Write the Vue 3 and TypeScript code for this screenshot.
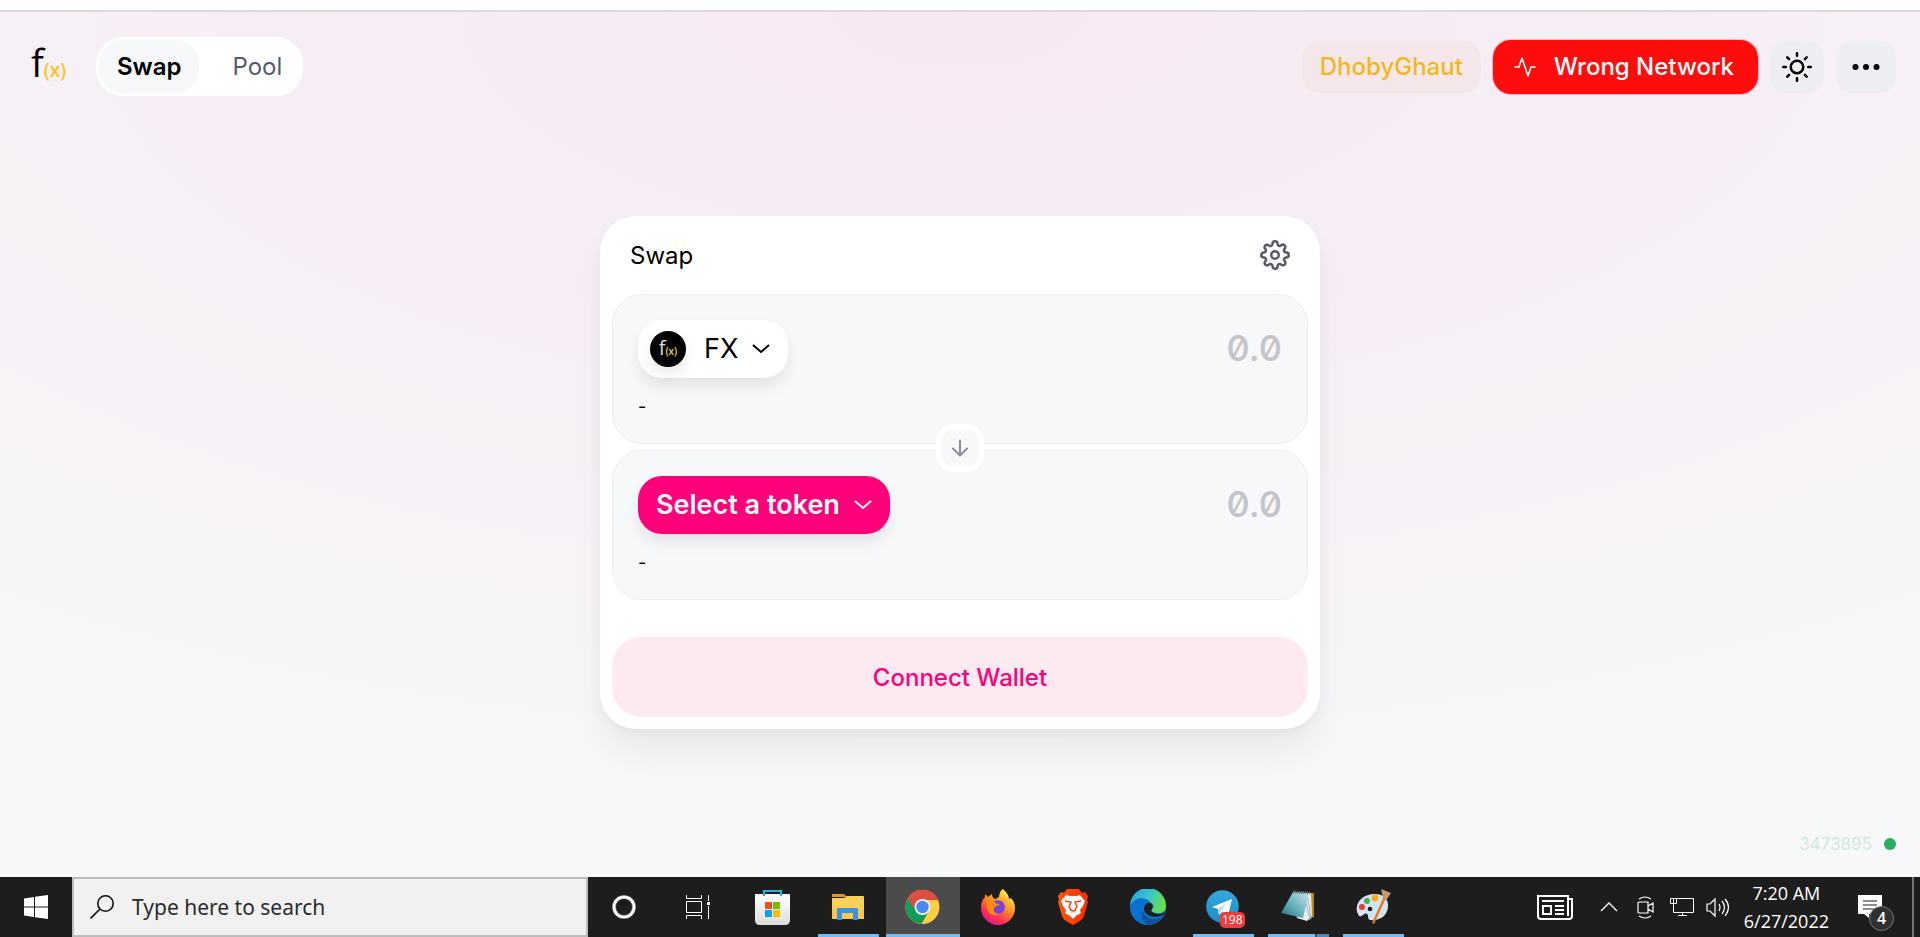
<script setup lang="ts">
import { ref } from 'vue'

interface TaskApp {
  id: string
  label: string
  state: 'idle' | 'running' | 'stacked' | 'active'
}

const apps: TaskApp[] = [
  { id: 'store', label: 'Microsoft Store', state: 'idle' },
  { id: 'explorer', label: 'File Explorer', state: 'running' },
  { id: 'chrome', label: 'Google Chrome', state: 'active' },
  { id: 'firefox', label: 'Firefox', state: 'idle' },
  { id: 'brave', label: 'Brave', state: 'idle' },
  { id: 'edge', label: 'Microsoft Edge', state: 'idle' },
  { id: 'telegram', label: 'Telegram', state: 'running' },
  { id: 'notepad', label: 'Notepad', state: 'stacked' },
  { id: 'paint', label: 'Paint', state: 'running' },
]

const amountIn = ref('')
const amountOut = ref('')
const query = ref('')
</script>

<template>
  <div class="screen">
    <div class="browser-edge"></div>

    <div class="page">
      <header class="topbar">
        <a class="logo" href="#" aria-label="f(x) home">
          <span class="logo-f">f</span><span class="logo-x">(x)</span>
        </a>
        <nav class="tabs">
          <a class="tab current" href="#swap">Swap</a>
          <a class="tab" href="#pool">Pool</a>
        </nav>
        <div class="actions">
          <span class="chain">DhobyGhaut</span>
          <button class="wrong" type="button">
            <svg class="i24" viewBox="0 0 24 24" fill="none" stroke="currentColor" stroke-width="1.6" stroke-linecap="round" stroke-linejoin="round"><polyline points="22 12 18 12 15 21 9 3 6 12 2 12" /></svg>
            <span>Wrong Network</span>
          </button>
          <button class="square" type="button" aria-label="Toggle theme">
            <svg class="i30" viewBox="0 0 24 24" fill="none" stroke="currentColor" stroke-width="2" stroke-linecap="round"><circle cx="12" cy="12" r="5" /><path d="M12 1v2M12 21v2M4.22 4.22l1.42 1.42M18.36 18.36l1.42 1.42M1 12h2M21 12h2M4.22 19.78l1.42-1.42M18.36 5.64l1.42-1.42" /></svg>
          </button>
          <button class="square" type="button" aria-label="More">
            <svg class="i36" viewBox="0 0 24 24" fill="currentColor"><circle cx="5" cy="12" r="2" /><circle cx="12" cy="12" r="2" /><circle cx="19" cy="12" r="2" /></svg>
          </button>
        </div>
      </header>

      <main class="stage">
        <section class="card">
          <div class="card-head">
            <h1>Swap</h1>
            <button class="plain" type="button" aria-label="Settings">
              <svg class="i30" viewBox="0 0 24 24" fill="none" stroke="currentColor" stroke-width="2" stroke-linecap="round" stroke-linejoin="round"><circle cx="12" cy="12" r="3" /><path d="M19.4 15a1.65 1.65 0 0 0 .33 1.82l.06.06a2 2 0 0 1 0 2.83 2 2 0 0 1-2.83 0l-.06-.06a1.65 1.65 0 0 0-1.82-.33 1.65 1.65 0 0 0-1 1.51V21a2 2 0 0 1-2 2 2 2 0 0 1-2-2v-.09A1.65 1.65 0 0 0 9 19.4a1.65 1.65 0 0 0-1.82.33l-.06.06a2 2 0 0 1-2.83 0 2 2 0 0 1 0-2.83l.06-.06a1.65 1.65 0 0 0 .33-1.82 1.65 1.65 0 0 0-1.51-1H3a2 2 0 0 1-2-2 2 2 0 0 1 2-2h.09A1.65 1.65 0 0 0 4.6 9a1.65 1.65 0 0 0-.33-1.82l-.06-.06a2 2 0 0 1 0-2.83 2 2 0 0 1 2.83 0l.06.06a1.65 1.65 0 0 0 1.82.33H9a1.65 1.65 0 0 0 1-1.51V3a2 2 0 0 1 2-2 2 2 0 0 1 2 2v.09a1.65 1.65 0 0 0 1 1.51 1.65 1.65 0 0 0 1.82-.33l.06-.06a2 2 0 0 1 2.83 0 2 2 0 0 1 0 2.83l-.06.06a1.65 1.65 0 0 0-.33 1.82V9a1.65 1.65 0 0 0 1.51 1H21a2 2 0 0 1 2 2 2 2 0 0 1-2 2h-.09a1.65 1.65 0 0 0-1.51 1z" /></svg>
            </button>
          </div>

          <div class="panel">
            <div class="row">
              <button class="token" type="button">
                <span class="coin"><span class="coin-f">f</span><span class="coin-x">(x)</span></span>
                <span class="symbol">FX</span>
                <svg class="chev" viewBox="0 0 18 10" fill="none" stroke="currentColor" stroke-width="2"><path d="M1 1l8 7 8-7" /></svg>
              </button>
              <input v-model="amountIn" class="amount" placeholder="0.0" inputmode="decimal" aria-label="Amount to pay" />
            </div>
            <div class="fiat">-</div>
          </div>

          <button class="flip" type="button" aria-label="Switch tokens">
            <svg class="i24" viewBox="0 0 24 24" fill="none" stroke="currentColor" stroke-width="2" stroke-linecap="round" stroke-linejoin="round"><path d="M12 4.500v15M19 12.500l-7 7-7-7" /></svg>
          </button>

          <div class="panel">
            <div class="row">
              <button class="token select" type="button">
                <span>Select a token</span>
                <svg class="chev" viewBox="0 0 18 10" fill="none" stroke="currentColor" stroke-width="2"><path d="M1 1l8 7 8-7" /></svg>
              </button>
              <input v-model="amountOut" class="amount" placeholder="0.0" inputmode="decimal" aria-label="Amount to receive" />
            </div>
            <div class="fiat">-</div>
          </div>

          <button class="connect" type="button">Connect Wallet</button>
        </section>
      </main>

      <div class="block"><a href="#block">3473895</a><i></i></div>
    </div>

    <footer class="taskbar">
      <button class="start" type="button" aria-label="Start">
        <svg class="i24" viewBox="0 0 24 24" fill="#fff"><path d="M0 3.400L10 2v9.500H0zM11 1.800L24 0v11.500H11zM0 12.500h10V22L0 20.600zM11 12.500h13V24l-13-1.800z" /></svg>
      </button>
      <label class="search">
        <svg class="i24" viewBox="0 0 24 24" fill="none" stroke="#111" stroke-width="1.600"><circle cx="15.500" cy="8.500" r="7.700" /><path d="M10 14L.5 23.500" /></svg>
        <input v-model="query" placeholder="Type here to search" aria-label="Search" />
      </label>
      <button class="cell cortana" type="button" aria-label="Cortana">
        <svg class="i24" viewBox="0 0 24 24" fill="none"><circle cx="12" cy="12" r="10" stroke="#888" stroke-width="4" /><circle cx="12" cy="12" r="10" stroke="#fff" stroke-width="2.500" /></svg>
      </button>
      <button class="cell" type="button" aria-label="Task View">
        <svg class="i24" viewBox="0 0 24 24" fill="none" stroke="#fff" stroke-width="1"><path d="M.5 0v3.500h15V0M.5 24v-3.500h15V24M.5 6.500h15v11H.5zM22.500 0v6M22.500 11v13" /><path d="M21 7h3v3h-3z" fill="#fff" stroke="none" /></svg>
      </button>

      <button v-for="app in apps" :key="app.id" class="cell" :class="app.state" type="button" :aria-label="app.label">
        <svg v-if="app.id === 'store'" class="i36" viewBox="0 0 36 36">
          <defs><linearGradient id="bag" x1="0" y1="0" x2="0" y2="1"><stop offset="0" stop-color="#fff" /><stop offset="1" stop-color="#dcdcdc" /></linearGradient></defs>
          <path d="M0 5h35v26q0 5-5 5H5q-5 0-5-5z" fill="url(#bag)" /><path d="M9 7V2h17v5" fill="none" stroke="#1db2e8" stroke-width="2" />
          <path d="M10 13h7v7h-7z" fill="#f25022" /><path d="M18 13h7v7h-7z" fill="#7fba00" /><path d="M10 21h7v7h-7z" fill="#00a4ef" /><path d="M18 21h7v7h-7z" fill="#ffb900" />
        </svg>
        <svg v-else-if="app.id === 'explorer'" class="i36" viewBox="0 0 36 36">
          <path d="M2 5h12l3 3H2z" fill="#e09b0c" /><path d="M2 9h12l3-2h16q1 0 1 1v22H3q-1 0-1-1z" fill="#fccf58" /><path d="M2 20h32v10H2z" fill="#f9c23d" opacity=".5" />
          <path d="M7 31V20q0-1 1-1h19q1 0 1 1v11h-5v-7H12v7z" fill="#3a93dd" />
        </svg>
        <svg v-else-if="app.id === 'chrome'" class="i36" viewBox="0 0 36 36">
          <circle cx="17.500" cy="18" r="17" fill="#ffcd42" />
          <path d="M17.500 18L2.800 9.500A17 17 0 0 1 33.200 11H17.500z" fill="#db4f43" />
          <path d="M2.800 9.500A17 17 0 0 0 16.500 35L24 22l-12-1z" fill="#109d59" />
          <path d="M2.800 9.500L10.500 22l5-8z" fill="#109d59" /><path d="M2.800 9.500l6 10 3-8.500h21.400A17 17 0 0 0 2.800 9.500z" fill="#db4f43" />
          <circle cx="17.500" cy="18" r="8" fill="#f1f1f1" /><circle cx="17.500" cy="18" r="6.200" fill="#4688f4" />
        </svg>
        <svg v-else-if="app.id === 'firefox'" class="i36" viewBox="0 0 36 36">
          <defs><linearGradient id="fox" x1=".8" y1=".05" x2=".25" y2=".95"><stop offset="0" stop-color="#fff44f" /><stop offset=".4" stop-color="#ff9a1f" /><stop offset=".75" stop-color="#ff3750" /><stop offset="1" stop-color="#e31587" /></linearGradient></defs>
          <path d="M23 0c3 3 6 6 6 10l2-1c3 3 4 7 4 10a17 17 0 0 1-34 0c0-5 1-8 4-11V5l3 3 4-3c0 3 1 4 3 5l4 0c0-5 1-8 4-10z" fill="url(#fox)" />
          <circle cx="18" cy="18" r="7" fill="#7a42d8" /><path d="M5 12c4-2 7-1 10 1 1 2 3 2 5 2-2 2-5 2-6 4-1 4 2 6 5 6-5 3-11 0-12-6-1-3-1-5-2-7z" fill="#ff8a16" />
          <path d="M17 10c5-1 9 2 9 6" fill="none" stroke="#ffa827" stroke-width="3" />
        </svg>
        <svg v-else-if="app.id === 'brave'" class="i36" viewBox="0 0 36 36">
          <defs><linearGradient id="lion" x1="0" x2="1"><stop offset="0" stop-color="#ff5601" /><stop offset="1" stop-color="#ff2b00" /></linearGradient></defs>
          <path d="M12 0h12l3 4 3-1 3 4-1 4 1 2-4 14q-1 3-4 5l-7 4-7-4q-3-2-4-5L3 13l1-2-1-4 3-4 3 1z" fill="url(#lion)" />
          <path d="M11 6l4 1h6l4-1 5 6-2 5-3 4 1 3-3 2-2-2-3-1-3 1-2 2-3-2 1-3-3-4-2-5z" fill="#fff" />
          <path d="M10 12l6 1-2 5 2 3M26 12l-6 1 2 5-2 3M15 21l3 1 3-1" fill="none" stroke="#f9470f" stroke-width="1.500" /><path d="M18 23l5 2-5 5-5-5z" fill="#fff" />
        </svg>
        <svg v-else-if="app.id === 'edge'" class="i36" viewBox="0 0 36 36">
          <defs><linearGradient id="wave" x1="0" y1=".2" x2="1" y2=".5"><stop offset="0" stop-color="#28a5e0" /><stop offset=".5" stop-color="#35c5cf" /><stop offset="1" stop-color="#68e04c" /></linearGradient></defs>
          <circle cx="18" cy="18" r="18" fill="#0c72cf" /><path d="M12 20a12 12 0 0 0 21 6 18 18 0 0 1-15 10q-8-5-6-16z" fill="#124f94" />
          <path d="M0 17A18 18 0 0 1 36 17c0 5-4 8-9 7-4 0-6-1-6-3 2-2 2-5 0-7C15 6 3 9 0 17z" fill="url(#wave)" />
          <path d="M22 15c-3-3-8 0-8 5 1 7 10 10 19 6l3-6c-1 4-5 5-9 5-4-1-7-3-5-5 1-1 2-3 0-5z" fill="#1d1e1e" />
        </svg>
        <svg v-else-if="app.id === 'telegram'" class="i36" viewBox="0 0 36 36">
          <defs><linearGradient id="tg" x1="0" y1="0" x2="0" y2="1"><stop offset="0" stop-color="#34aadf" /><stop offset="1" stop-color="#1c8cc8" /></linearGradient></defs>
          <circle cx="17.500" cy="17.500" r="16.300" fill="url(#tg)" /><path d="M7 18L27 10l-4 17-6-4-3 3-1-6z" fill="#fff" /><path d="M13 20l9-6-6 7-2 5z" fill="#b6d7e9" />
        </svg>
        <svg v-else-if="app.id === 'notepad'" class="i36" viewBox="0 0 36 36">
          <defs><linearGradient id="pad" x1="1" y1="0" x2="0" y2="1"><stop offset="0" stop-color="#c5e7eb" /><stop offset=".6" stop-color="#5caab6" /><stop offset="1" stop-color="#246a78" /></linearGradient></defs>
          <path d="M30 4h4v24l-4 1z" fill="#b88428" /><path d="M13 4h18l1 23-5 5-10-3z" fill="#e5f1f5" /><path d="M13 3l16 1-6 25L1 24z" fill="url(#pad)" />
          <path d="M26 14l4 17M28 9l3 21" stroke="#9bb4be" stroke-width="1" /><path d="M13 3l17 1" stroke="#777" stroke-width="3" stroke-dasharray="1 1" />
        </svg>
        <svg v-else class="i36" viewBox="0 0 36 36">
          <path d="M2 23C0 12 9 5 20 5c9 0 14 6 13 13-1 10-9 14-18 13-3-1-1-5-3-6-3-2-5 4-8 2z" fill="#cfe4f5" /><circle cx="15" cy="20" r="2.300" fill="#1d1d1d" />
          <circle cx="7" cy="18" r="3" fill="#e23d30" /><circle cx="12" cy="12" r="3" fill="#4cb043" /><circle cx="20" cy="9" r="3.400" fill="#f7a81b" />
          <path d="M29 7l2 2-12 26-2-1z" fill="#e47a1c" /><path d="M26 0l10 4-4 6-4-1z" fill="#c49a6c" />
        </svg>
        <span v-if="app.id === 'telegram'" class="count">198</span>
      </button>

      <div class="tray">
        <button class="plain" type="button" aria-label="News">
          <svg class="i36" viewBox="0 0 36 36" fill="none" stroke="#fff" stroke-width="2"><path d="M31 10h4v17q0 3-3 3H4q-3 0-3-3V7h30v20" /><path d="M5 12h22M6 17h8v8H6zM18 17h9M18 21h9M18 25h9" /></svg>
        </button>
        <button class="plain up" type="button" aria-label="Hidden icons">
          <svg class="i18" viewBox="0 0 18 18" fill="none" stroke="#fff" stroke-width="1.300"><path d="M1 13l8-8 8 8" /></svg>
        </button>
        <button class="plain" type="button" aria-label="Meet Now">
          <svg class="i24" viewBox="0 0 24 24" fill="none" stroke="#fff" stroke-width="1.200"><path d="M5 7h9v11H5q-1 0-1-1V8q0-1 1-1zM14 11l5-3v9l-5-3M5 4q6-4 12 0M5 21q6 4 12 0" /></svg>
        </button>
        <button class="plain" type="button" aria-label="Network">
          <svg class="i24" viewBox="0 0 24 24" fill="none" stroke="#fff" stroke-width="1"><path d="M6.500 3.500h17v14h-20v-8M.5 3.500h6v5h-6zM3.500 3.500v6M12.500 17.500v3M8 20.500h9" /></svg>
        </button>
        <button class="plain" type="button" aria-label="Volume">
          <svg class="i24" viewBox="0 0 24 24" fill="none" stroke="#fff" stroke-width="1.200"><path d="M1 9h3l5-5v17l-5-5H1zM13 9q2 3 0 7M16 6q5 6 0 13M19 4q7 8 0 17" /></svg>
        </button>
        <div class="clock"><span>7:20 AM</span><span>6/27/2022</span></div>
        <button class="plain notes" type="button" aria-label="Notifications">
          <svg class="i24" viewBox="0 0 24 24"><path d="M0 0h24v19H11v4l-5-4H0z" fill="#fff" /><path d="M5 6h14M5 10h14M5 14h14" stroke="#1d1d1d" stroke-width="1" /></svg>
          <span class="badge">4</span>
        </button>
        <div class="desktop"></div>
      </div>
    </footer>
  </div>
</template>

<style>
body {
  margin: 0;
}
</style>

<style scoped>
.screen {
  display: flex;
  flex-direction: column;
  min-height: 100vh;
  font-family: Inter, "Liberation Sans", sans-serif;
  font-size: 24px;
  line-height: 30px;
  color: #000;
}
.screen * {
  box-sizing: border-box;
}
button,
input {
  font: inherit;
  color: inherit;
  border: 0;
  padding: 0;
  margin: 0;
  background: none;
}
a {
  color: inherit;
  text-decoration: none;
}
svg {
  display: block;
  flex: none;
}
.i18 { width: 18px; height: 18px; }
.i24 { width: 24px; height: 24px; }
.i30 { width: 30px; height: 30px; }
.i36 { width: 36px; height: 36px; }

.browser-edge {
  height: 12px;
  background: #fff;
  border-bottom: 2px solid #dadcdc;
}
.page {
  flex: 1;
  display: flex;
  flex-direction: column;
  background: radial-gradient(100% 100% at 50% 0, rgba(255, 0, 122, 0.063), rgba(255, 255, 255, 0)) #f7f8fa;
}
.topbar {
  display: flex;
  align-items: center;
  padding: 25px 24px 0 31px;
}
.logo {
  display: flex;
  align-items: baseline;
  width: 65px;
  height: 59px;
  font-family: "Open Sans", "Noto Sans", sans-serif;
}
.logo-f {
  font-size: 38px;
  line-height: 51px;
}
.logo-x {
  font-size: 19px;
  color: #fdc414;
  font-weight: 600;
}
.tabs {
  display: flex;
  gap: 3px;
  padding: 3px;
  border-radius: 27px;
  background: #fff;
}
.tab {
  padding: 12px 18px 11px;
  border-radius: 24px;
  color: #565a69;
  line-height: 30px;
}
.tab.current {
  color: #000;
  font-weight: 600;
  background: #f7f8fa;
}
.tab:last-child {
  padding-left: 30px;
}
.actions {
  display: flex;
  align-items: center;
  gap: 12px;
  margin-left: auto;
  font-weight: 500;
}
.chain {
  padding: 11px 18px;
  border-radius: 18px;
  color: #f3b71e;
  background: #f5e7e9;
}
.wrong {
  display: flex;
  align-items: center;
  gap: 17px;
  padding: 12px 24px 12px 20px;
  border-radius: 18px;
  color: #fff;
  background: #ff0d0d;
  box-shadow: 0 0 1px 1px rgba(255, 0, 90, 0.25);
}
.square {
  padding: 8px 12px;
  height: 52px;
  border-radius: 16px;
  background: #edeef2;
}

.stage {
  flex: 1;
  padding: 120px 24px 0;
}
.card {
  max-width: 720px;
  margin: 0 auto;
  padding: 12px;
  border-radius: 36px;
  background: #fff;
  box-shadow: 0 0 1px rgba(0, 0, 0, 0.01), 0 6px 12px rgba(0, 0, 0, 0.04), 0 24px 36px rgba(0, 0, 0, 0.04), 0 36px 48px rgba(0, 0, 0, 0.01);
}
.card-head {
  display: flex;
  align-items: center;
  justify-content: space-between;
  padding: 12px 18px 24px;
}
h1 {
  margin: 0;
  font-size: 24px;
  line-height: 32px;
  margin-bottom: -2px;
  font-weight: 400;
}
.plain {
  display: block;
  color: #565a69;
}
.panel {
  height: 150px;
  padding: 25px 25px 0;
  border: 1px solid #edeef2;
  border-radius: 30px;
  background: #f7f8fa;
}
.row {
  display: flex;
  align-items: center;
}
.token {
  display: flex;
  align-items: center;
  flex: none;
  height: 58px;
  padding: 0 18px 0 12px;
  border-radius: 24px;
  font-size: 27px;
  background: #fff;
  box-shadow: 0 9px 15px rgba(0, 0, 0, 0.08);
}
.symbol {
  margin-left: 18px;
}
.chev {
  width: 18px;
  height: 10px;
  margin-left: 14px;
}
.token.select {
  padding-left: 18px;
  color: #fff;
  font-weight: 600;
  background: #ff007a;
}
.coin {
  display: flex;
  align-items: baseline;
  justify-content: center;
  width: 36px;
  height: 36px;
  border-radius: 50%;
  background: #000;
  color: #ddd;
  font-family: "Open Sans", "Noto Sans", sans-serif;
  box-shadow: 0 9px 15px rgba(0, 0, 0, 0.08);
}
.coin-f {
  font-size: 20px;
  line-height: 34px;
}
.coin-x {
  font-size: 10px;
  font-weight: 600;
  color: #e8d03a;
}
.amount {
  flex: 1;
  min-width: 0;
  height: 45px;
  padding-bottom: 2px;
  font-size: 36px;
  font-weight: 500;
  text-align: right;
  font-feature-settings: "zero";
  outline: 0;
}
.amount::placeholder {
  color: #c3c5cb;
  opacity: 1;
}
.fiat {
  padding-top: 17px;
  font-size: 18px;
  line-height: 24px;
}
.flip {
  position: relative;
  display: flex;
  align-items: center;
  justify-content: center;
  width: 48px;
  height: 48px;
  margin: -20px auto -22px;
  border: 6px solid #fff;
  border-radius: 18px;
  background: #f7f8fa;
  color: #888d9b;
}
.connect {
  display: block;
  width: 100%;
  height: 80px;
  padding-top: 2px;
  margin-top: 37px;
  border-radius: 30px;
  color: #ff007a;
  font-weight: 500;
  background: #fde9f0;
}
.block {
  display: flex;
  align-items: center;
  justify-content: flex-end;
  gap: 12px;
  padding: 0 24px 18px;
  font-size: 17px;
  color: #cfeadb;
}
.block i {
  width: 12px;
  height: 12px;
  border-radius: 50%;
  background: #27ae60;
}

.taskbar {
  display: flex;
  height: 60px;
  background: #1d1d1d;
  color: #fff;
  font-family: "Open Sans", "Noto Sans", sans-serif;
}
.start {
  display: flex;
  align-items: center;
  justify-content: center;
  width: 72px;
}
.search {
  display: flex;
  align-items: center;
  width: 516px;
  padding: 0 16px;
  gap: 18px;
  border: 2px solid #bcbcbc;
  background: #f1f1f1;
}
.search input {
  flex: 1;
  min-width: 0;
  font-family: "Noto Sans", sans-serif;
  font-size: 21px;
  color: #222;
  outline: 0;
}
.search input::placeholder {
  color: #2b2b2b;
  opacity: 1;
}
.cell {
  position: relative;
  display: flex;
  align-items: center;
  justify-content: center;
  width: 75px;
  flex: none;
}
.cell.cortana {
  width: 72px;
}
.cell.active {
  background: #4b4b4b;
  border-left: 1px solid #1d1d1d;
}
.cell.running::after,
.cell.active::after,
.cell.stacked::after {
  content: "";
  position: absolute;
  left: 8px;
  right: 6px;
  bottom: 0;
  height: 3px;
  background: #76b9ed;
}
.cell.active::after {
  left: 0;
  right: 0;
}
.cell.stacked::after {
  background: linear-gradient(90deg, #76b9ed 47px, #35536b 47px, #35536b 49px, #5689b0 49px);
}
.count {
  position: absolute;
  left: 35px;
  top: 35px;
  padding: 0 2px;
  border-radius: 5px;
  font-size: 12px;
  line-height: 16px;
  background: #f23c3c;
}
.tray {
  display: flex;
  align-items: center;
  gap: 12px;
  margin-left: auto;
}
.up {
  margin: 0 4px 0 15px;
}
.clock {
  display: flex;
  flex-direction: column;
  text-align: center;
  font-size: 18px;
  line-height: 28px;
  margin: 0 17px 0 2px;
}
.notes {
  position: relative;
}
.badge {
  position: absolute;
  left: 11px;
  top: 11px;
  width: 25px;
  height: 25px;
  border: 1px solid #777;
  border-radius: 50%;
  background: #303030;
  color: #fff;
  font-size: 16px;
  font-weight: 600;
  line-height: 23px;
}
.desktop {
  width: 8px;
  height: 60px;
  margin-left: 18px;
  border-left: 2px solid #777;
}
</style>
